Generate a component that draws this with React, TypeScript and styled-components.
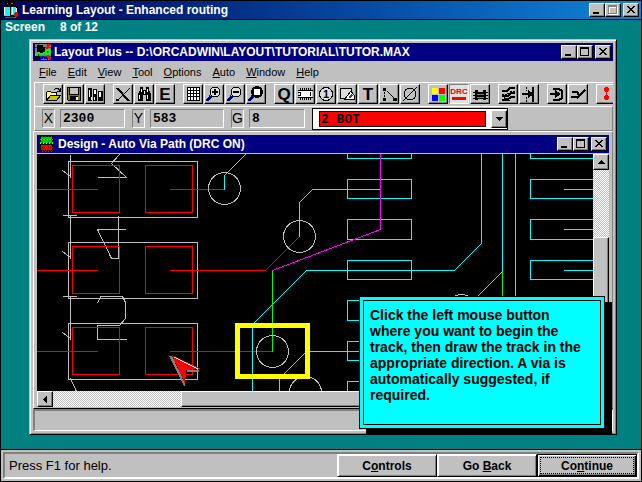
import React from 'react';
import styled, { createGlobalStyle, css } from 'styled-components';

const SILVER = '#c0c0c0';
const GREY = '#808080';
const NAVY = '#000080';
const TEAL = '#008080';
const CYAN = '#00ffff';

const GlobalStyle = createGlobalStyle`
  * { box-sizing: border-box; }
  body { margin: 0; font-family: "Liberation Sans", Arial, sans-serif; font-size: 12px; color: #000; }
  button, input, select { font: inherit; color: inherit; margin: 0; padding: 0; border-radius: 0; }
  svg { display: block; }
`;

const Page = styled.div`
  display: flex;
  flex-direction: column;
  height: 100vh;
  min-height: 440px;
  border: 1px solid #000;
  background: ${TEAL};
`;

const TitleBar = styled.header<{ $main?: boolean }>`
  display: flex;
  flex: none;
  align-items: center;
  height: 18px;
  padding: 0 2px;
  gap: 3px;
  color: #fff;
  background: ${NAVY};
  ${p => p.$main && css`
    height: 19px;
    border-bottom: 1px solid #000;
    background: linear-gradient(90deg, #000058, #0648a0 55%, #1084d8);
  `}
`;

const TitleText = styled.h1`
  flex: 1;
  min-width: 0;
  margin: 0;
  overflow: hidden;
  white-space: nowrap;
  font-size: 12px;
  line-height: 16px;
  font-weight: bold;
`;

const WindowButtons = styled.div`
  display: flex;
  button:last-child { margin-left: 2px; }
`;

const raised = css`
  border: 1px solid;
  border-color: #fff #000 #000 #fff;
  box-shadow: inset -1px -1px ${GREY};
  background: ${SILVER};
`;

const CaptionButton = styled.button`
  ${raised}
  width: 16px;
  height: 14px;
`;

const Desktop = styled.main`
  position: relative;
  display: flex;
  flex: 1;
  flex-direction: column;
  min-height: 0;
  padding: 0 24px 14px 28px;
`;

const ScreenCount = styled.p`
  display: flex;
  gap: 15px;
  height: 19px;
  margin: 0 0 0 -24px;
  color: #fff;
  font-size: 12px;
  font-weight: bold;
  line-height: 15px;
`;

const AppWindow = styled.section`
  display: flex;
  flex: 1;
  flex-direction: column;
  min-height: 0;
  padding: 3px;
  border: 1px solid;
  border-color: ${SILVER} #000 #000 ${SILVER};
  box-shadow: inset 1px 1px #fff, inset -1px -1px ${GREY};
  background: ${SILVER};
`;

const MenuBar = styled.nav`
  display: flex;
  flex: none;
  height: 21px;
  padding-left: 6px;
  gap: 11px;
`;

const MenuItem = styled.button`
  border: 0;
  background: none;
  font-size: 11px;
  line-height: 20px;
`;

const ToolBar = styled.div`
  display: flex;
  flex: none;
  gap: 8px;
  height: 24px;
  margin-left: 1px;
  padding: 1px 0 0 8px;
  overflow: hidden;
  border-top: 1px solid #fff;
  border-left: 1px solid #fff;
`;

const ToolGroup = styled.div`
  display: flex;
  flex: none;
  gap: 1px;
`;

const ToolButton = styled.button<{ $pressed?: boolean }>`
  ${raised}
  display: grid;
  place-items: center;
  width: 20px;
  height: 20px;
  ${p => p.$pressed && css`
    border-color: ${GREY} #fff #fff ${GREY};
    background: #e0e0e0;
    box-shadow: none;
  `}
`;

const CoordBar = styled.div`
  display: flex;
  flex: none;
  align-items: center;
  gap: 7px;
  height: 25px;
  margin-left: 1px;
  padding-left: 7px;
  border: 1px solid;
  border-color: #fff ${GREY} ${GREY} #fff;
`;

const Coord = styled.label`
  display: flex;
  gap: 5px;
`;

const sunken = css`
  border: 1px solid;
  border-color: ${GREY} #fff #fff ${GREY};
  background: ${SILVER};
`;

const CoordName = styled.span`
  ${sunken}
  width: 13px;
  height: 19px;
  font-size: 14px;
  line-height: 17px;
  text-align: center;
`;

const CoordValue = styled.input<{ $width: number }>`
  ${sunken}
  width: ${p => p.$width}px;
  height: 19px;
  padding: 0 2px;
  font: bold 13px "Liberation Mono", monospace;
`;

const LayerBox = styled.div`
  display: flex;
  gap: 5px;
  width: 196px;
  height: 22px;
  padding: 1px 0 1px 6px;
  border: 1px solid #000;
  background: #fff;
`;

const LayerSelect = styled.select`
  flex: 1;
  align-self: center;
  height: 16px;
  padding: 0 1px;
  appearance: none;
  border: 1px solid #000;
  background: #f00;
  font: bold 13px "Liberation Mono", monospace;
`;

const DropArrow = styled.span`
  ${raised}
  display: grid;
  place-items: center;
  width: 16px;
`;

const DesignWindow = styled.section`
  display: flex;
  flex: 1;
  flex-direction: column;
  min-height: 0;
  padding: 3px 3px 1px;
  border: 1px solid;
  border-color: #fff ${GREY} #000 #fff;
`;

const Workspace = styled.div`
  display: grid;
  flex: 1;
  grid-template: minmax(0, 1fr) 16px / minmax(0, 1fr) 16px;
  min-height: 0;
  margin-top: 1px;
`;

const Board = styled.svg`
  width: 100%;
  height: 100%;
  background: #000;
`;

const Scroll = styled.div<{ $vertical?: boolean }>`
  display: flex;
  flex-direction: ${p => (p.$vertical ? 'column' : 'row')};
  background: repeating-conic-gradient(#fff 0 25%, ${SILVER} 0 50%) 0 0 / 2px 2px;
`;

const ScrollButton = styled.button`
  ${raised}
  display: grid;
  flex: none;
  place-items: center;
  width: 16px;
  height: 16px;
`;

const ScrollSpace = styled.div<{ $size: number }>`
  flex: 0 0 ${p => p.$size}px;
`;

const Thumb = styled.div`
  ${raised}
  flex: 1;
`;

const StatusPanel = styled.div`
  flex: none;
  height: 22px;
  border: 2px solid;
  border-color: ${GREY} #fff #fff ${GREY};
  border-width: 2px 1px 1px 2px;
`;

const Callout = styled.aside`
  position: absolute;
  right: 36px;
  bottom: 20px;
  width: 246px;
  height: 133px;
  padding: 3px;
  border: 1px solid #000;
  background: ${CYAN};
  box-shadow: 7px 6px #000;
`;

const CalloutText = styled.p`
  height: 100%;
  margin: 0;
  padding: 6px 10px 6px 6px;
  border: 1px solid #000;
  font-size: 14px;
  font-weight: bold;
  line-height: 16px;
`;

const Footer = styled.footer`
  flex: none;
  height: 32px;
  padding: 2px;
  border-top: 1px solid #000;
  background: ${SILVER};
`;

const FooterPanel = styled.div`
  display: flex;
  align-items: center;
  height: 27px;
  padding-left: 4px;
  border: 2px solid;
  border-color: ${GREY} #fff #fff ${GREY};
`;

const HelpText = styled.span`
  flex: 1;
  font-size: 13px;
`;

const FooterButton = styled.button<{ $focused?: boolean }>`
  ${raised}
  width: 100px;
  height: 23px;
  box-shadow: inset 1px 1px #fff, inset -1px -1px ${GREY};
  font-weight: bold;
  ${p => p.$focused && css`
    border-color: #000;
    padding: 2px;
    box-shadow: inset 1px 1px #fff, inset -1px -1px #000, inset -2px -2px ${GREY};
    span { display: block; height: 17px; line-height: 16px; border: 1px dotted #000; }
  `}
`;

const Pixels = ({ w, h, children }: { w: number; h: number; children: React.ReactNode }) => (
  <svg width={w} height={h} viewBox={`0 0 ${w} ${h}`} shapeRendering="crispEdges" fill="none" stroke="none" aria-hidden="true">
    {children}
  </svg>
);

function Caption({ disabled }: { disabled?: boolean }) {
  return (
    <WindowButtons>
      <CaptionButton aria-label="Minimize"><Pixels w={14} h={12}><path d="M3 8h6v2H3z" fill="#000" /></Pixels></CaptionButton>
      <CaptionButton aria-label="Maximize">
        <Pixels w={14} h={12}>
          {disabled && <path d="M3.5 2.5h8v8h-8zM3 3.5h8" stroke="#fff" />}
          <path d="M2.5 1.5h8v8h-8zM2 2.5h9" stroke={disabled ? GREY : '#000'} />
        </Pixels>
      </CaptionButton>
      <CaptionButton aria-label="Close">
        <Pixels w={14} h={12}>
          <path d="M3 2h2v1h1v1h2V3h1V2h2v1h-1v1H9v1H8v1h1v1h1v1h1v1H9V8H8V7H6v1H5v1H3V8h1V7h1V6h1V5H5V4H4V3H3z" fill="#000" />
        </Pixels>
      </CaptionButton>
    </WindowButtons>
  );
}

const BookIcon = () => (
  <Pixels w={16} h={16}>
    <path d="M2 0h10v3H2z" fill="#000" />
    <path d="M3 1h1v1h1V1h2v1h1V1h2v1" fill={GREY} />
    <path d="M0 4h15v12H0z" fill="#000" />
    <path d="M1 5h5l1 1v8H1zM8 5h5v8H8z" fill={CYAN} />
    <path d="M1 5h1v8H1zM9 5h1v7H9z" fill="#fff" />
    <path d="M2 15h11" stroke={TEAL} />
    <path d="M12 10h3v4h-1v1h-2v-1h-1v-3h1z" fill="#f00" />
    <path d="M13 6h1v4h-1z" fill="#fff" />
  </Pixels>
);

const LayoutIcon = () => (
  <Pixels w={16} h={16}>
    <path d="M0 0h16v16H0z" fill={GREY} />
    <path d="M0 3.5h16M3.5 0v16M0 12.5h16M12.5 0v16" stroke="#404040" />
    <path d="M2 1h6v2h2v6l-6 1-2-3zM0 12h5v4H0z" fill="#000" />
    <path d="M15 0l-3 4v3M13 10v3l3 3" stroke="#f00" strokeWidth="2" />
    <path d="M0 11l3-2 4 1 4-2" stroke="#0f0" strokeWidth="2" />
    <circle cx="13" cy="8" r="2" stroke="#0f0" strokeWidth="2" />
    <path d="M5 15l3-2 5 2" stroke="#00f" strokeWidth="2" />
  </Pixels>
);

const DesignIcon = () => (
  <Pixels w={16} h={16}>
    <path d="M1 0h13v16H1z" fill="#000" />
    <path d="M2 1h11v5H2z" fill="#0c0" />
    <path d="M2 9h11v5H2z" fill="#f00" />
    <path d="M1 3.5h13M1 6.5h13" stroke="#0f0" strokeDasharray="2 1" />
    <path d="M1 11.5h13M1 14.5h13" stroke="#800000" strokeDasharray="1 1" />
    <path d="M3.5 0v16M6.5 0v16M9.5 0v16M12.5 0v16" stroke="#063" strokeDasharray="1 2" />
    <path d="M1 8.5h13" stroke="#000" />
    <path d="M1 7.5h13" stroke="#ff0" strokeDasharray="1 2" />
  </Pixels>
);

const lens = <><circle cx="10" cy="7" r="5" stroke="#000" fill="#ddd" /><path d="M6 11l-4 5" stroke={NAVY} strokeWidth="3" /></>;

const glyphs: Record<string, React.ReactNode> = {
  Open: <><path d="M2.5 15V7.5l1-1h3l1 1h5V11" stroke="#000" fill="#ffff80" /><path d="M2.5 15.5l4-5h10l-4 5z" stroke="#000" fill="#c8c800" /><path d="M10 4.5l2-1h2l2 2M16.5 3v4M13 6.5h4" stroke="#000" /></>,
  Save: <><path d="M2.5 2.5h13v13h-12l-1-1z" fill="#808000" stroke="#000" /><path d="M5 3h8v6H5z" fill={SILVER} /><path d="M4.5 3v6h9V3" stroke="#000" /><path d="M5 11h8v5H5z" fill="#000" /><path d="M11 12h2v3h-2z" fill="#fff" /></>,
  Library: <><path d="M2 3h4v13H2zM7 4h4v12H7zM12 6h5v10h-5z" fill="#000" /><path d="M3 5h1v7H3zM8 5h2v4H8zM8 12h1v3H8zM13 7h2v5h-2zM5 12h1v3H5z" fill="#fff" /></>,
  Delete: <><path d="M3 3l12 13" stroke="#000" strokeWidth="2" /><path d="M16 3L4 15" stroke="#000" /><path d="M2 15h3" stroke="#000" strokeWidth="2" /></>,
  Find: <><path d="M5 2h3v3h3V2h3v3l2 4v7h-5v-6H8v6H3V9l2-4z" fill="#000" /><path d="M6.5 4v3M4.5 10v4M12.5 10v4M12.5 4v3M9.5 6v3" stroke="#fff" /></>,
  Edit: <text x="9" y="15" textAnchor="middle" fontSize="17" fontWeight="bold" fill="#000">E</text>,
  Grid: <><path d="M3 2h13v13H3z" fill="#fff" /><path d="M3.5 2v14M6.5 2v14M9.5 2v14M12.5 2v14M15.5 2v14M3 2.5h13M3 5.5h13M3 8.5h13M3 11.5h13M3 15.5h13" stroke="#000" /></>,
  'Zoom in': <>{lens}<path d="M7 7h6M10 4v6" stroke="#000" strokeWidth="2" /></>,
  'Zoom out': <>{lens}<path d="M7 7h6" stroke="#000" strokeWidth="2" /></>,
  'Zoom all': <><circle cx="10" cy="7" r="5" stroke="#000" strokeWidth="2" fill="#000" /><path d="M7 4h6v6H7z" fill="#fff" /><path d="M6 11l-4 5" stroke={NAVY} strokeWidth="3" /></>,
  Query: <text x="9" y="15" textAnchor="middle" fontSize="17" fontWeight="bold" fill="#000">Q</text>,
  Component: <><path d="M3 5h13v8H3z" fill="#fff" /><path d="M2 5.5h15M2 12.5h15M4.5 7v4M2 7.5h3M2 10.5h3M14.5 7v4" stroke="#000" /><path d="M4 4h12M4 14h12" stroke="#000" strokeWidth="2" strokeDasharray="1 1" /></>,
  Pin: <><circle cx="9" cy="9" r="6.5" stroke="#000" fill="#ddd" /><text x="9" y="13" textAnchor="middle" fontSize="11" fontWeight="bold" fill="#000">1</text></>,
  Obstacle: <><path d="M2.5 3.5h11v5l-4 5h-7z" fill="#ddd" stroke="#000" /><path d="M7 14l6-8 3 4v4h-4z" fill="#fff" stroke="#000" /><path d="M10 12l4-4 1 3-3 2z" fill="#444" /></>,
  Text: <text x="9" y="15" textAnchor="middle" fontSize="17" fontWeight="bold" fill="#000">T</text>,
  Connection: <><path d="M4.5 4v10M5 4l9 9" stroke="#000" strokeDasharray="2 1" /><path d="M3 3h3v3H3zM3 13h3v3H3zM13 13h4v3h-4z" fill="#000" /></>,
  Error: <><circle cx="9" cy="9" r="6" stroke="#000" /><path d="M2 16L16 2" stroke="#000" /></>,
  Color: <><path d="M3 3h6v6H3z" fill="#ff0" /><path d="M10 3h6v6h-6z" fill="#f00" /><path d="M3 10h6v6H3z" fill="#00f" /><path d="M10 10h6v6h-6z" fill="#0f0" /></>,
  'Online DRC': <><text x="9" y="9" textAnchor="middle" fontSize="8" fontWeight="bold" fill="#e00000">DRC</text><path d="M2 12h14v3H2z" fill="#f00" /></>,
  Reconnect: <><path d="M4 5h3v2h5V5h3v10h-3v-1H7v1H4z" fill="#000" /><path d="M2 7.5h15M2 10.5h15M2 13.5h15" stroke="#000" strokeWidth="1" /><path d="M6 9.5h7M6 12.5h7" stroke={GREY} /></>,
  'Auto path': <><path d="M3 6h5l3-3h5" stroke="#000" strokeWidth="2" /><path d="M3 9.5h5l4-3h4" stroke="#000" strokeDasharray="2 1" /><path d="M3 11h6l3-3h4M3 15h5l-3-2M8 15l4-3h4" stroke="#000" strokeWidth="2" /></>,
  Shove: <><path d="M6.5 2v4M6.5 12v5" stroke="#000" strokeDasharray="2 1" /><path d="M13 2v15" stroke="#000" strokeWidth="2" /><path d="M2 9h10M8 6l4 3-4 3" stroke="#000" strokeWidth="2" /></>,
  'Edit segment': <><path d="M5 4h6M5 15h6" stroke="#000" strokeWidth="2" /><path d="M2 9h9M7 6l4 3-4 3" stroke="#000" strokeWidth="2" /><path d="M11 4l3 2v7l-3 2" stroke="#000" strokeWidth="2" /></>,
  'Add track': <><path d="M2 12h7l7-7M3 7h5l2 3" stroke="#000" strokeWidth="2" /><path d="M8 8l3 3-3 3" stroke="#000" /></>,
  Refresh: <path d="M8 2h3v1h1v3h-1v1h-1v3h1v1h1v3h-1v1H8v-1H7v-3h1v-1h1V7H8V6H7V3h1z" fill="#f00" />,
};

const groups = [
  ['Open', 'Save', 'Library'],
  ['Delete', 'Find', 'Edit'],
  ['Grid', 'Zoom in', 'Zoom out', 'Zoom all'],
  ['Query', 'Component', 'Pin', 'Obstacle', 'Text', 'Connection', 'Error'],
  ['Color', 'Online DRC', 'Reconnect'],
  ['Auto path', 'Shove'],
  ['Edit segment', 'Add track'],
  ['Refresh'],
];

const menus = ['File', 'Edit', 'View', 'Tool', 'Options', 'Auto', 'Window', 'Help'];
const padRows = [161, 242, 323];
const pinRows: [number, number][] = [[139, 19], [179, 19], [219, 20], [260, 19], [300, 20], [341, 19], [381, 19]];

const BoardDrawing = () => (
  <Board shapeRendering="crispEdges" role="img" aria-label="Circuit board tracks">
    <g transform="translate(-37 -154)" fill="none">
      <g transform="translate(.5 .5)">
        <g stroke={SILVER}>
          {padRows.map(y => <rect key={y} x="68" y={y} width="129" height="56" />)}
          <path d="M70 154v23M62 170l8 6M62 215h14M70 215v43M62 251l8 6M62 296h14M70 296v43M62 332l8 6M70 378l6 13" />
          <path d="M119 154l-8 9 15 14M97 177h29M97 229h28M97 229l14 29h7M118 215v43" />
          <path d="M97 303l3-7h22l3 6v16l-6 7H97v14h29" />
        </g>
        <g stroke="#f00">
          {padRows.map(y => (
            <g key={y}>
              <rect x="72" y={y + 4} width="47" height="47" />
              <rect x="145" y={y + 4} width="47" height="47" />
              <path d={`M36 ${y + 28}h61`} />
            </g>
          ))}
          <path d="M169 189h55M169 270h96l34-34M169 351h103" />
        </g>
        <g stroke={CYAN}>
          {pinRows.map(([y, h]) => (
            <g key={y}>
              <rect x="347" y={y} width="64" height={h} />
              <rect x="530" y={y} width="100" height={h} />
              <path d={`M563 ${y + 10}h60`} />
            </g>
          ))}
          <path d="M246 153l-22 22v14M299 236v-34l13-13h68M481 153v90l-27 27H306l-54 54v67M502 153v118l-26 26M515 153v238M279 391v-13l27-27h80" />
        </g>
        <path d="M380 153v76l-108 41" stroke="#f0f" />
        <path d="M272 270v81M502 271v60" stroke="#0f0" />
        <g stroke={SILVER}>
          <circle cx="224" cy="188" r="16" />
          <circle cx="299" cy="236" r="16" />
          <circle cx="272" cy="351" r="16" />
          <circle cx="305" cy="392" r="16" />
          <circle cx="461" cy="310" r="16" />
        </g>
      </g>
      <rect x="237.5" y="325.5" width="70" height="51" stroke="#ff0" strokeWidth="5" />
      <path d="M169 356h3l13 28v2h-1zM187 370h12v2h-12z" fill={GREY} />
      <path d="M172 355l29 14-15 1-1 14z" fill="#f00" />
      <path d="M174 357l24 12" stroke="#fff" />
    </g>
  </Board>
);

export default function App() {
  return (
    <>
      <GlobalStyle />
      <Page>
        <TitleBar $main>
          <BookIcon />
          <TitleText>Learning Layout - Enhanced routing</TitleText>
          <Caption disabled />
        </TitleBar>
        <Desktop>
          <ScreenCount><span>Screen</span><span>8 of 12</span></ScreenCount>
          <AppWindow>
            <TitleBar>
              <LayoutIcon />
              <TitleText>Layout Plus -- D:\ORCADWIN\LAYOUT\TUTORIAL\TUTOR.MAX</TitleText>
              <Caption />
            </TitleBar>
            <MenuBar>
              {menus.map(m => <MenuItem key={m}><u>{m[0]}</u>{m.slice(1)}</MenuItem>)}
            </MenuBar>
            <ToolBar role="toolbar">
              {groups.map(g => (
                <ToolGroup key={g[0]}>
                  {g.map(name => (
                    <ToolButton key={name} aria-label={name} $pressed={name === 'Online DRC'}>
                      <Pixels w={18} h={18}>{glyphs[name]}</Pixels>
                    </ToolButton>
                  ))}
                </ToolGroup>
              ))}
            </ToolBar>
            <CoordBar>
              <Coord><CoordName>X</CoordName><CoordValue $width={65} defaultValue="2300" /></Coord>
              <Coord><CoordName>Y</CoordName><CoordValue $width={74} defaultValue="583" /></Coord>
              <Coord><CoordName>G</CoordName><CoordValue $width={56} defaultValue="8" /></Coord>
              <LayerBox>
                <LayerSelect aria-label="Layer" defaultValue="2"><option value="2">2 BOT</option></LayerSelect>
                <DropArrow><Pixels w={7} h={4}><path d="M0 0h7v1H6v1H5v1H4v1H3V3H2V2H1V1H0z" fill="#000" /></Pixels></DropArrow>
              </LayerBox>
            </CoordBar>
            <DesignWindow>
              <TitleBar>
                <DesignIcon />
                <TitleText as="h2">Design - Auto Via Path (DRC ON)</TitleText>
                <Caption />
              </TitleBar>
              <Workspace>
                <BoardDrawing />
                <Scroll $vertical>
                  <ScrollButton aria-label="Scroll up"><Pixels w={7} h={4}><path d="M3 0h1v1h1v1h1v1h1v1H0V3h1V2h1V1h1z" fill="#000" /></Pixels></ScrollButton>
                  <ScrollSpace $size={67} />
                  <Thumb />
                </Scroll>
                <Scroll>
                  <ScrollButton aria-label="Scroll left"><Pixels w={4} h={7}><path d="M0 3h1V2h1V1h1V0h1v7H3V6H2V5H1V4H0z" fill="#000" /></Pixels></ScrollButton>
                  <ScrollSpace $size={128} />
                  <Thumb />
                </Scroll>
              </Workspace>
            </DesignWindow>
            <StatusPanel />
          </AppWindow>
          <Callout>
            <CalloutText>
              Click the left mouse button where you want to begin the track, then draw the track in the appropriate direction. A via is automatically suggested, if required.
            </CalloutText>
          </Callout>
        </Desktop>
        <Footer>
          <FooterPanel>
            <HelpText>Press F1 for help.</HelpText>
            <FooterButton><span>C<u>o</u>ntrols</span></FooterButton>
            <FooterButton><span>Go <u>B</u>ack</span></FooterButton>
            <FooterButton $focused><span>Co<u>n</u>tinue</span></FooterButton>
          </FooterPanel>
        </Footer>
      </Page>
    </>
  );
}
